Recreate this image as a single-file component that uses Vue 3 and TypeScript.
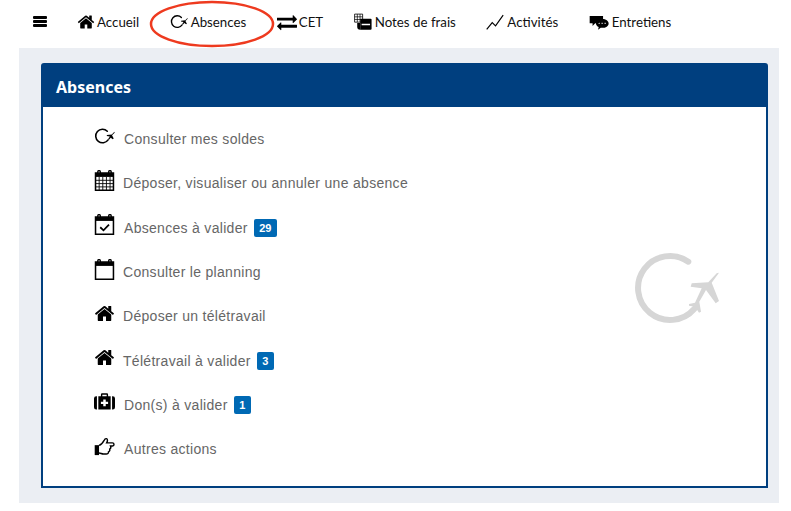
<script setup lang="ts">
interface Shape {
  d: string
  stroke?: number
  cap?: boolean
}

const home: Shape[] = [{ d: 'M1472 992v480q0 26-19 45t-45 19h-384v-384h-256v384h-384q-26 0-45-19t-19-45v-480q0-1 .5-3t.5-3l575-474 575 474q1 2 1 6zm223-69l-62 74q-8 9-21 11h-3q-13 0-21-7l-692-577-692 577q-12 8-24 7-13-2-21-11l-62-74q-8-10-7-23.500t11-21.500l719-599q32-26 76-26t76 26l244 204v-195q0-14 9-23t23-9h192q14 0 23 9t9 23v408l219 182q10 8 11 21.500t-7 23.500z' }]

const exchange: Shape[] = [{ d: 'M1792 1184v192q0 13-9.500 22.500t-22.500 9.500h-1376v192q0 13-9.500 22.500t-22.500 9.500q-12 0-24-10l-319-320q-9-9-9-22 0-14 9-23l320-320q9-9 23-9 13 0 22.500 9.500t9.500 22.500v192h1376q13 0 22.500 9.500t9.500 22.500zm0-544q0 14-9 23l-320 320q-9 9-23 9-13 0-22.500-9.500t-9.500-22.500v-192h-1376q-13 0-22.500-9.500t-9.500-22.500v-192q0-13 9.500-22.500t22.500-9.500h1376v-192q0-14 9-23t23-9q12 0 24 10l319 319q9 9 9 23z' }]

// arc + little plane, drawn on a 1792 box so every icon shares one viewBox
const plane: Shape[] = [
  { d: 'M1135 443A580 580 0 1 0 1205 1183', stroke: 135, cap: true },
  { d: 'M1740 500L1520 720 1100 760 1090 850 1350 890 1210 1100 1280 1180 1430 1000 1600 1120 1680 1060 1540 790 1760 570z' },
]

const emptyCal: Shape[] = [
  { d: 'M130 260h1530v1470H130z', stroke: 130 },
  { d: 'M130 260h1530v330H130z' },
  { d: 'M320 330V140q0-90 110-90t110 90v190M1250 330V140q0-90 110-90t110 90v190', stroke: 110 },
]
const gridCal: Shape[] = [
  ...emptyCal,
  { d: 'M130 880h1530M130 1160h1530M130 1440h1530M440 590v1140M750 590v1140M1060 590v1140M1370 590v1140', stroke: 75 },
]
const checkCal: Shape[] = [
  ...emptyCal,
  { d: 'M530 1130l280 260 470-480', stroke: 150 },
]

const medkit: Shape[] = [{ d: 'M0 640q0-190 190-190h60v1130h-60Q0 1580 0 1390zM1792 640q0-190-190-190h-60v1130h60q190 0 190-190zM370 450h220V300q0-100 100-100h412q100 0 100 100v150h220v1130H370zM710 320v130h372V320zM790 720v200H590v180h200v200h212v-200h200V920h-200V720z' }]

const pointer: Shape[] = [
  { d: 'M60 780h370v850H60z' },
  { d: 'M430 800c220-60 330-220 420-400 50-110 100-200 210-170 130 40 100 220 20 360h490c170 0 190 240 10 260h-170c60 130 0 220-70 260 30 110-20 210-100 240 10 130-90 190-190 190H800c-130 0-240-90-370-90', stroke: 120 },
]

const menu: { label: string; icon: Shape[]; gap: number; badge?: number }[] = [
  { label: 'Consulter mes soldes', icon: plane, gap: 9 },
  { label: 'Déposer, visualiser ou annuler une absence', icon: gridCal, gap: 8 },
  { label: 'Absences à valider', icon: checkCal, gap: 9, badge: 29 },
  { label: 'Consulter le planning', icon: emptyCal, gap: 8 },
  { label: 'Déposer un télétravail', icon: home, gap: 8 },
  { label: 'Télétravail à valider', icon: home, gap: 8, badge: 3 },
  { label: 'Don(s) à valider', icon: medkit, gap: 9, badge: 1 },
  { label: 'Autres actions', icon: pointer, gap: 9 },
]

const notes: Shape[] = [
  { d: 'M60 110h800v800H60z', stroke: 80 },
  { d: 'M330 110v800M600 110v800M60 380h800M60 650h800', stroke: 70 },
  { d: 'M620 560h1040q90 0 90 90v930q0 90-90 90H620zM760 1080v130h840v-130z' },
  { d: 'M320 1000h300v660q-300 0-300-300z' },
]

const chart: Shape[] = [{ d: 'M70 1640L620 950l330 330 760-1060', stroke: 115 }]

const chat: Shape[] = [
  { d: 'M60 350h1200v330q-300 60-400 330H560l-240 240v-240H60z' },
  { d: 'M1180 620c330 0 580 170 580 400s-250 400-580 400q-70 0-130-10l-240 170 60-240c-140-70-250-180-250-320 0-230 230-400 560-400zM860 970v100h90V970zM1130 970v100h90V970zM1400 970v100h90V970z' },
]

const nav: { label: string; icon: Shape[]; size: number; gap: number }[] = [
  { label: 'Accueil', icon: home, size: 18, gap: 2 },
  { label: 'Absences', icon: plane, size: 18, gap: 3 },
  { label: 'CET', icon: exchange, size: 20, gap: 2 },
  { label: 'Notes de frais', icon: notes, size: 18, gap: 3 },
  { label: 'Activités', icon: chart, size: 18, gap: 3 },
  { label: 'Entretiens', icon: chat, size: 20, gap: 3 },
]
</script>

<template>
  <div class="page">
    <nav class="topbar">
      <span class="burger"><i></i><i></i><i></i></span>
      <div class="links">
        <a v-for="item in nav" :key="item.label" class="link" :style="{ gap: item.gap + 'px' }">
          <svg viewBox="0 0 1792 1792" :width="item.size" :height="item.size">
            <path
              v-for="(s, i) in item.icon"
              :key="i"
              :d="s.d"
              :fill="s.stroke ? 'none' : '#000'"
              :stroke="s.stroke ? '#000' : 'none'"
              :stroke-width="s.stroke"
              :stroke-linecap="s.cap ? 'round' : 'butt'"
              fill-rule="evenodd"
            />
          </svg>
          {{ item.label }}
        </a>
      </div>
      <svg class="circled" width="128" height="50" viewBox="0 0 128 50">
        <ellipse cx="64" cy="25" rx="61" ry="22" fill="none" stroke="#ee3a1f" stroke-width="2.5" />
      </svg>
    </nav>

    <main class="content">
      <section class="panel">
        <h2 class="panel-head">Absences</h2>
        <div class="panel-body">
          <ul class="actions">
            <li v-for="row in menu" :key="row.label" class="action">
              <svg class="action-icon" viewBox="0 0 1792 1792" width="21" height="21" :style="{ marginRight: row.gap + 'px' }">
                <path
                  v-for="(s, i) in row.icon"
                  :key="i"
                  :d="s.d"
                  :fill="s.stroke ? 'none' : '#000'"
                  :stroke="s.stroke ? '#000' : 'none'"
                  :stroke-width="s.stroke"
                  :stroke-linecap="s.cap ? 'round' : 'butt'"
                  fill-rule="evenodd"
                />
              </svg>
              <span>{{ row.label }}</span>
              <span v-if="row.badge" class="badge">{{ row.badge }}</span>
            </li>
          </ul>
          <svg class="logo" viewBox="0 0 88 74" width="88" height="74">
            <path d="M54.300 9.700A32 32 0 1 0 60.200 57" fill="none" stroke="#d6d6d6" stroke-width="6" stroke-linecap="round" />
            <path d="M85 20.700L77.700 30.700 85 49 81.700 51.300 72 38 65.300 49.700 67 59.700 65 60.700 61 54.700 55 53.700 55 52 61 50.700 67.700 36.300 56.700 34.700 57.700 31.300 74.300 30.300 82.700 21.300z" fill="#d6d6d6" />
          </svg>
        </div>
      </section>
    </main>
  </div>
</template>

<style scoped>
.page {
  width: 791px;
  height: 511px;
  position: relative;
  background: #fff;
  overflow: hidden;
}

.topbar {
  height: 48px;
  display: flex;
  align-items: center;
  padding: 0 0 5px 33px;
  box-sizing: border-box;
  font-family: "Lato", "Noto Sans", sans-serif;
  font-size: 13.3px;
  color: #111;
}

.burger {
  width: 14px;
  display: flex;
  flex-direction: column;
  gap: 1px;
  margin-right: 30px;
}

.burger i {
  height: 3px;
  background: #000;
  border-radius: 1px;
}

.links {
  display: flex;
  gap: 30.5px;
}

.link {
  display: flex;
  align-items: center;
}

.circled {
  position: absolute;
  left: 148px;
  top: -1px;
}

.content {
  margin: 0 12px 8px 19px;
  height: 455px;
  padding: 15px 11px 15px 22px;
  box-sizing: border-box;
  background: #ebeef3;
}

.panel {
  height: 425px;
  display: flex;
  flex-direction: column;
  background: #fff;
  border: 2px solid #003f7f;
  border-radius: 3px 3px 0 0;
  box-sizing: border-box;
}

.panel-head {
  margin: 0;
  height: 42px;
  line-height: 44px;
  padding-left: 13px;
  background: #003f7f;
  color: #fff;
  font-family: "Noto Sans", sans-serif;
  font-size: 16px;
  font-weight: 700;
}

.panel-body {
  flex: 1;
  display: flex;
  align-items: center;
  justify-content: space-between;
  padding: 0 44px 16px 51px;
}

.actions {
  margin: 0;
  padding: 10px 0 0;
  list-style: none;
}

.action {
  height: 44.3px;
  display: flex;
  align-items: center;
  font-family: "Liberation Sans", Arial, sans-serif;
  font-size: 14px;
  letter-spacing: 0.3px;
  color: #666;
}

.action-icon {
  position: relative;
  top: -3px;
}

.badge {
  margin-left: 6px;
  padding: 0 5.5px;
  height: 18px;
  line-height: 18px;
  background: #0069b4;
  color: #fff;
  border-radius: 2px;
  font-size: 11px;
  font-weight: 700;
  letter-spacing: 0;
}

.logo {
  flex: none;
}
</style>
